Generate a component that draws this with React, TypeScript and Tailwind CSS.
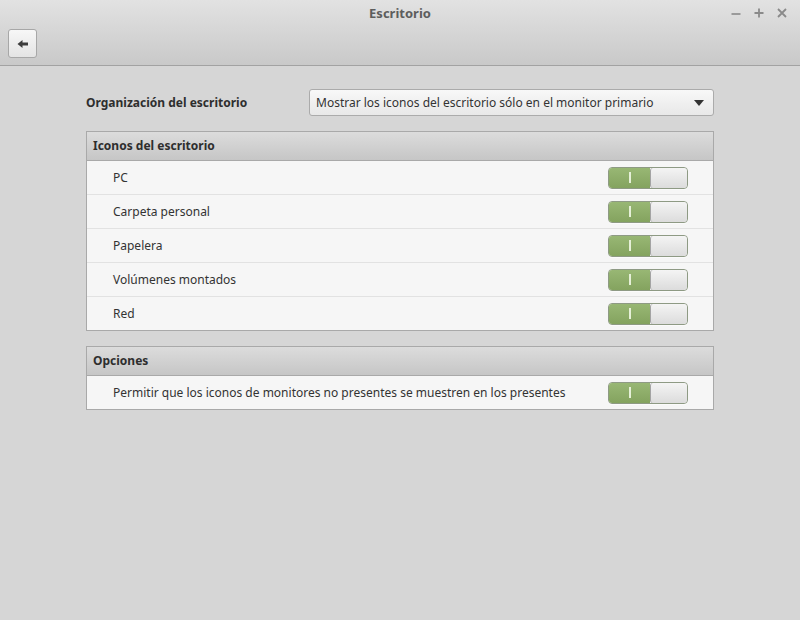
import { useState } from "react";

const iconRows = ["PC", "Carpeta personal", "Papelera", "Volúmenes montados", "Red"];

function Switch({ on, onToggle }: { on: boolean; onToggle: () => void }) {
  return (
    <button
      onClick={onToggle}
      className="flex h-[22px] w-[80px] shrink-0 overflow-hidden rounded-[4px] border border-[#8e9a84] shadow-[0_1px_0_rgba(255,255,255,0.6)]"
    >
      {on ? (
        <>
          <span className="flex h-full w-[41px] items-center justify-center bg-gradient-to-b from-[#98b774] to-[#84a35f]">
            <span className="h-[11px] w-[2px] bg-[#e6f0d8]" />
          </span>
          <span className="h-full flex-1 rounded-[3px] border-l border-[#a3a3a3] bg-gradient-to-b from-[#f4f4f4] to-[#dcdcdc]" />
        </>
      ) : (
        <>
          <span className="h-full flex-1 rounded-[3px] bg-gradient-to-b from-[#f4f4f4] to-[#dcdcdc]" />
          <span className="h-full w-[41px] bg-[#cfcfcf]" />
        </>
      )}
    </button>
  );
}

function Section({ title, children }: { title: string; children: React.ReactNode }) {
  return (
    <div className="border border-[#a9a9a9] bg-[#f6f6f6]">
      <div className="flex h-[29px] items-center border-b border-[#a9a9a9] bg-gradient-to-b from-[#dcdcdc] to-[#c6c6c6] px-[6px] text-[12px] font-bold text-[#2e2e2e]">
        {title}
      </div>
      {children}
    </div>
  );
}

function Row({ label, on, onToggle, last }: { label: string; on: boolean; onToggle: () => void; last?: boolean }) {
  return (
    <div
      className={
        "flex items-center justify-between pl-[26px] pr-[25px] text-[12px] text-[#333333] " +
        (last ? "h-[33px]" : "h-[34px] border-b border-[#e2e2e2]")
      }
    >
      <span>{label}</span>
      <Switch on={on} onToggle={onToggle} />
    </div>
  );
}

export default function App() {
  const [icons, setIcons] = useState([true, true, true, true, true]);
  const [showAll, setShowAll] = useState(true);

  return (
    <div
      className="flex h-[620px] w-[800px] flex-col bg-[#d6d6d6]"
      style={{ fontFamily: '"Noto Sans", "Open Sans", sans-serif' }}
    >
      {/* Title bar + toolbar */}
      <div className="h-[66px] shrink-0 border-b border-[#a2a2a2] bg-gradient-to-b from-[#e2e2e2] to-[#c9c9c9]">
        <div className="relative flex h-[27px] items-center justify-center">
          <span className="text-[13px] font-bold text-[#5d5d5d]">Escritorio</span>
          <div className="absolute right-[12px] top-[7px] flex items-center gap-[11px] text-[#8a8a8a]">
            <svg width="12" height="12" viewBox="0 0 12 12">
              <path d="M1.5 7h9" stroke="currentColor" strokeWidth="1.6" />
            </svg>
            <svg width="12" height="12" viewBox="0 0 12 12">
              <path d="M6 1.5v9M1.5 6h9" stroke="currentColor" strokeWidth="1.8" />
            </svg>
            <svg width="12" height="12" viewBox="0 0 12 12">
              <path d="M2 2l8 8M10 2l-8 8" stroke="currentColor" strokeWidth="1.8" />
            </svg>
          </div>
        </div>
        <div className="pl-[8px] pt-[2px]">
          <button className="flex h-[29px] w-[29px] items-center justify-center rounded-[3px] border border-[#a7a7a7] bg-gradient-to-b from-[#f7f7f7] to-[#e4e4e4]">
            <svg width="12" height="10" viewBox="0 0 12 10">
              <path d="M0.5 5L5.5 1v2.5H11v3H5.5V9z" fill="#3c3c3c" />
            </svg>
          </button>
        </div>
      </div>

      {/* Content */}
      <div className="flex flex-col px-[86px] pt-[23px]">
        <div className="flex h-[27px] items-center justify-between">
          <span className="text-[12px] font-bold text-[#2e2e2e]">Organización del escritorio</span>
          <button className="flex h-[27px] w-[405px] items-center justify-between rounded-[3px] border border-[#ababab] bg-gradient-to-b from-[#f8f8f8] to-[#e8e8e8] pl-[6px] pr-[9px] text-[12px] text-[#333333]">
            <span>Mostrar los iconos del escritorio sólo en el monitor primario</span>
            <svg width="10" height="6" viewBox="0 0 10 6">
              <path d="M0 0h10L5 6z" fill="#333333" />
            </svg>
          </button>
        </div>

        <div className="mt-[15px]">
          <Section title="Iconos del escritorio">
            {iconRows.map((label, i) => (
              <Row
                key={label}
                label={label}
                on={icons[i]}
                last={i === iconRows.length - 1}
                onToggle={() => setIcons((prev) => prev.map((v, j) => (j === i ? !v : v)))}
              />
            ))}
          </Section>
        </div>

        <div className="mt-[15px]">
          <Section title="Opciones">
            <Row
              label="Permitir que los iconos de monitores no presentes se muestren en los presentes"
              on={showAll}
              last
              onToggle={() => setShowAll((v) => !v)}
            />
          </Section>
        </div>
      </div>
    </div>
  );
}
